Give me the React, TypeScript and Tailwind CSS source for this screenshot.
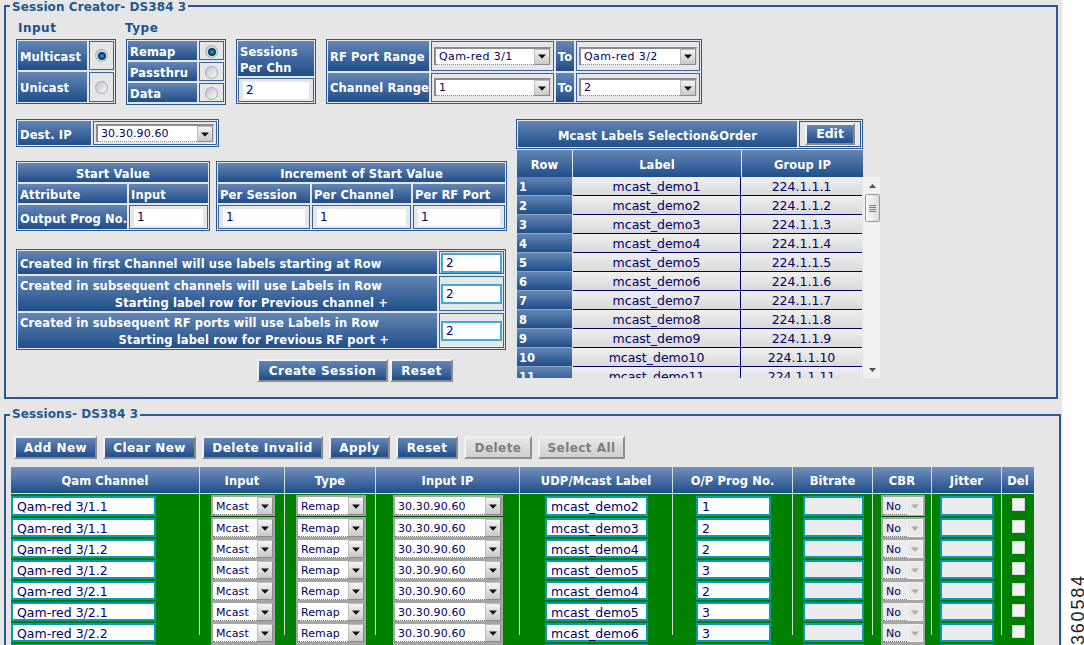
import React from "react";

const B = "bg-linear-to-b from-[#6486b4] to-[#1f4e8a] text-white font-bold text-[11.5px] tracking-[0.12px] flex items-center";
const H = B + " leading-[14px] pt-[3px]";
const H3 = B + " leading-[14px] pt-[2px]";
const LC = "bg-[#e4e6ea] border border-[#3a659b] flex items-center";
const Tbl = "border border-[#2b5a93] p-px flex flex-col gap-[2px]";

function Arrow({ off }: { off?: boolean }) {
  return (
    <div className={off
      ? "w-[16px] self-stretch border border-[#f4f4f4] bg-[#e9e9e9] flex items-center justify-center"
      : "w-[16px] self-stretch border border-[#8a8a8a] border-t-[#bdbdbd] border-l-[#bdbdbd] bg-linear-to-b from-[#f4f4f4] to-[#c9c9c9] flex items-center justify-center"}>
      <svg width="8" height="5" viewBox="0 0 8 5"><path d="M0 0.5h8L4 4.8z" fill={off ? "#aaa" : "#111"} /></svg>
    </div>
  );
}

function FormSelect({ text }: { text: string }) {
  return (
    <div className="flex-1 mx-[2px] h-[18px] flex bg-white border-t-2 border-l-2 border-[#8c8c8c] border-r border-r-[#d8d8d8] text-[11px] text-[#000066]">
      <div className={text.startsWith("Qam")
        ? "flex-1 pl-[3px] leading-[16px] tracking-[0.4px] border-b border-dotted border-[#888]"
        : "flex-1 pl-[3px] leading-[16px] tracking-[0.1px] border-b border-dotted border-[#888]"}>{text}</div>
      <Arrow />
    </div>
  );
}

function GridSelect({ text, w, first, off }: { text: string; w: string; first?: boolean; off?: boolean }) {
  return (
    <div className={w + " -mt-px"}>
      <div className={off
        ? "h-[21px] flex bg-[#ececec] border-2 border-b-1 border-[#a5a5a5] text-[11px] text-[#000066]"
        : "h-[21px] flex bg-white border-2 border-b-1 border-[#a5a5a5] text-[11px] text-[#000066]"}>
        <div className="flex-1 pl-[3px] leading-[19px] tracking-[0.1px] border-b border-dotted border-[#777]">{text}</div>
        <Arrow off={off} />
      </div>
      {first && <div className="h-px bg-[#004d00]" />}
    </div>
  );
}

function Radio({ on }: { on?: boolean }) {
  return (
    <div className="w-[13px] h-[13px] rounded-full border border-[#a8a8a8] bg-linear-to-br from-[#c4c4c4] to-[#f8f8f8] flex items-center justify-center">
      {on && <div className="w-[8px] h-[8px] rounded-full border-2 border-[#0b3f66] bg-[#1c8fc0]" />}
    </div>
  );
}

function RadioCell({ on, low }: { on?: boolean; low?: boolean }) {
  return <div className={LC + (low ? " justify-center w-[25px] pt-[2px]" : " justify-center w-[25px]")}><Radio on={on} /></div>;
}

function FormInput({ v, teal }: { v: string; teal?: boolean }) {
  return (
    <div className={teal
      ? "flex-1 mx-px h-[20px] bg-white border-2 border-[#41aad4] pl-[3px] text-[12px] leading-[16px] text-[#000066]"
      : "flex-1 mx-[3px] h-[19px] bg-white border border-[#dfe6ee] pl-[3px] text-[12px] leading-[17px] text-[#000066]"}>{v}</div>
  );
}

function Btn({ t, w, off }: { t: string; w: string; off?: boolean }) {
  return (
    <div className={w + (off
      ? " h-[23px] pt-px flex items-center justify-center border-2 border-[#f2f2f2] border-r-[#909090] border-b-[#909090] bg-linear-to-b from-[#e8e8e8] to-[#cfcfcf] text-[#7d7d7d] font-bold text-[12px] tracking-[0.45px]"
      : " h-[23px] pt-px flex items-center justify-center border-2 border-[#f2f2f2] border-r-[#8a8a8a] border-b-[#8a8a8a] bg-linear-to-b from-[#6486b4] to-[#1f4e8a] text-white font-bold text-[12px] tracking-[0.45px]")}>{t}</div>
  );
}

const labels = Array.from({ length: 11 }, (_, i) => i + 1);

const sessions: [string, string, string][] = [
  ["Qam-red 3/1.1", "mcast_demo2", "1"],
  ["Qam-red 3/1.1", "mcast_demo3", "2"],
  ["Qam-red 3/1.2", "mcast_demo4", "2"],
  ["Qam-red 3/1.2", "mcast_demo5", "3"],
  ["Qam-red 3/2.1", "mcast_demo4", "2"],
  ["Qam-red 3/2.1", "mcast_demo5", "3"],
  ["Qam-red 3/2.2", "mcast_demo6", "3"],
  ["", "", ""],
];

const Cols = "grid grid-cols-[189px_85px_91px_144px_153px_120px_80px_59px_70px_32px]";
const heads = ["Qam Channel", "Input", "Type", "Input IP", "UDP/Mcast Label", "O/P Prog No.", "Bitrate", "CBR", "Jitter", "Del"];
const GI = "border-2 border-[#0a99b0] pl-[4px] text-[#000066] text-[12.5px]";

function SessionRow({ r, i }: { r: [string, string, string]; i: number }) {
  const first = i === 0;
  const h = first ? "h-[20px] leading-[18px] " : "h-[19px] leading-[17px] ";
  return (
    <div className={first ? Cols + " h-[22px] items-start" : Cols + " h-[21px] items-start"}>
      <div><div className={h + GI + " w-[145px] bg-white"}>{r[0]}</div></div>
      <div className="pl-[11px]"><GridSelect text="Mcast" w="w-[64px]" first={first} /></div>
      <div className="pl-[11px]"><GridSelect text="Remap" w="w-[70px]" first={first} /></div>
      <div className="pl-[17px]"><GridSelect text="30.30.90.60" w="w-[110px]" first={first} /></div>
      <div className="pl-[25px]"><div className={h + GI + " w-[103px] bg-white"}>{r[1]}</div></div>
      <div className="pl-[23px]"><div className={h + GI + " w-[75px] bg-white"}>{r[2]}</div></div>
      <div className="pl-[10px]"><div className={h + GI + " w-[61px] bg-[#ececec]"} /></div>
      <div className="pl-[8px]"><GridSelect text="No" w="w-[44px]" first={first} off /></div>
      <div className="pl-[8px]"><div className={h + GI + " w-[54px] bg-[#ececec]"} /></div>
      <div className="pl-[10px] pt-[2px]"><div className="w-[13px] h-[13px] bg-[#f2f2f2] border border-[#d4d4d4]" /></div>
    </div>
  );
}

export default function App() {
  return (
    <div className="relative w-[1084px] h-[645px] overflow-hidden bg-white font-[DejaVu_Sans] text-[11px]">
      <div className="w-[1062px] h-[645px] bg-[#e6e6e6] pt-[5px] pl-[4px]">
        {/* Session creator */}
        <div className="relative w-[1054px] h-[394px] border-2 border-[#2b5a93] pl-[10px]">
          <div className="absolute -top-[7px] left-[4px] px-[2px] bg-[#e6e6e6] text-[#22598f] font-bold text-[12px] leading-[14px] tracking-[0.08px]">Session Creator- DS384 3</div>

          <div className="flex pt-[12px] gap-[10px]">
            <div className="w-[100px]">
              <div className="h-[20px] pl-[2px] text-[#1d5288] font-bold text-[12px] tracking-[0.5px] leading-[18px]">Input</div>
              <div className={Tbl + " h-[65px]"}>
                <div className="flex gap-[2px] h-[29px]">
                  <div className={H3 + " w-[69px] pl-[2px]"}>Multicast</div>
                  <RadioCell on />
                </div>
                <div className="flex gap-[2px] h-[30px]">
                  <div className={H3 + " w-[69px] pl-[2px]"}>Unicast</div>
                  <RadioCell />
                </div>
              </div>
            </div>
            <div className="w-[100px]">
              <div className="h-[20px] -ml-px text-[#1d5288] font-bold text-[12px] tracking-[0.5px] leading-[18px]">Type</div>
              <div className={Tbl + " h-[66px]"}>
                {["Remap", "Passthru", "Data"].map((t, i) => (
                  <div key={t} className="flex gap-[2px] h-[19px]">
                    <div className={H + " w-[69px] pl-[2px]"}>{t}</div>
                    <RadioCell on={i === 0} low />
                  </div>
                ))}
              </div>
            </div>
            <div className="w-[80px] pt-[20px]">
              <div className={Tbl + " h-[65px]"}>
                <div className={B + " h-[35px] pl-[2px] pt-[2px] leading-[16px]"}><span>Sessions<br />Per Chn</span></div>
                <div className={LC + " flex-1"}><FormInput v="2" /></div>
              </div>
            </div>
            <div className="w-[376px] pt-[20px]">
              <div className={Tbl + " h-[65px]"}>
                {[["RF Port Range", "Qam-red 3/1", "Qam-red 3/2"], ["Channel Range", "1", "2"]].map(([a, b, c]) => (
                  <div key={a} className="flex gap-[2px] flex-1">
                    <div className={H3 + " w-[101px] pl-[2px] whitespace-nowrap"}>{a}</div>
                    <div className={LC + " w-[123px]"}><FormSelect text={b} /></div>
                    <div className={H3 + " w-[18px] justify-center"}>To</div>
                    <div className={LC + " w-[124px]"}><FormSelect text={c} /></div>
                  </div>
                ))}
              </div>
            </div>
          </div>

          <div className="flex mt-[14px]">
            <div className="w-[500px]">
              <div className={Tbl + " w-[203px] h-[28px] !flex-row"}>
                <div className={H + " w-[73px] pl-[2px]"}>Dest. IP</div>
                <div className={LC + " w-[124px]"}><FormSelect text="30.30.90.60" /></div>
              </div>

              <div className="flex gap-[6px] mt-[14px]">
                <div className={Tbl + " w-[194px] h-[70px]"}>
                  <div className={H + " h-[19px] justify-center"}>Start Value</div>
                  <div className="flex gap-[2px] h-[19px]">
                    <div className={H + " w-[109px] pl-[2px]"}>Attribute</div>
                    <div className={H + " flex-1 pl-[2px]"}>Input</div>
                  </div>
                  <div className="flex gap-[2px] flex-1">
                    <div className={H + " w-[109px] pl-[2px] whitespace-nowrap"}>Output Prog No.</div>
                    <div className={LC + " flex-1"}><FormInput v="1" /></div>
                  </div>
                </div>
                <div className={Tbl + " w-[291px] h-[70px]"}>
                  <div className={H + " h-[19px] justify-center"}>Increment of Start Value</div>
                  <div className="flex gap-[2px] h-[19px]">
                    <div className={H + " w-[92px] pl-[2px] whitespace-nowrap"}>Per Session</div>
                    <div className={H + " w-[99px] pl-[2px] whitespace-nowrap"}>Per Channel</div>
                    <div className={H + " w-[92px] pl-[2px] whitespace-nowrap"}>Per RF Port</div>
                  </div>
                  <div className="flex gap-[2px] flex-1">
                    <div className={LC + " w-[92px]"}><FormInput v="1" /></div>
                    <div className={LC + " w-[99px]"}><FormInput v="1" /></div>
                    <div className={LC + " w-[92px]"}><FormInput v="1" /></div>
                  </div>
                </div>
              </div>

              <div className={Tbl + " w-[490px] mt-[18px]"}>
                <div className="flex gap-[2px] h-[23px]">
                  <div className={H + " w-[419px] pl-[2px]"}>Created in first Channel will use labels starting at Row</div>
                  <div className={LC + " w-[65px]"}><FormInput v="2" teal /></div>
                </div>
                <div className="flex gap-[2px] h-[35px]">
                  <div className={B + " w-[419px] !block pl-[2px] leading-[16.5px] pt-[2px]"}>
                    <div>Created in subsequent channels will use Labels in Row</div>
                    <div className="text-right pr-[49px]">Starting label row for Previous channel +</div>
                  </div>
                  <div className={LC + " w-[65px]"}><FormInput v="2" teal /></div>
                </div>
                <div className="flex gap-[2px] h-[35px]">
                  <div className={B + " w-[419px] !block pl-[2px] leading-[16.5px] pt-[2px]"}>
                    <div>Created in subsequent RF ports will use Labels in Row</div>
                    <div className="text-right pr-[48px]">Starting label row for Previous RF port +</div>
                  </div>
                  <div className={LC + " w-[65px]"}><FormInput v="2" teal /></div>
                </div>
              </div>

              <div className="flex gap-[2px] pl-[241px] mt-[9px]">
                <Btn t="Create Session" w="w-[131px]" />
                <Btn t="Reset" w="w-[63px]" />
              </div>
            </div>

            <div className="w-[364px]">
              <div className="w-[347px] h-[30px] border border-[#2b5a93] p-px flex gap-[2px]">
                <div className={H + " w-[279px] justify-center"}>Mcast Labels Selection&amp;Order</div>
                <div className="flex-1 border border-[#2b5a93] bg-[#e6e6e6] flex items-center justify-center">
                  <div className="w-[50px] h-[22px] pt-px flex items-center justify-center border-2 border-[#f2f2f2] border-r-[#8a8a8a] border-b-[#8a8a8a] bg-linear-to-b from-[#6486b4] to-[#1f4e8a] text-white font-bold text-[12.5px]">Edit</div>
                </div>
              </div>
              <div className="flex w-[346px] h-[27px] ml-px mt-px gap-px">
                <div className={H3 + " w-[55px] justify-center"}>Row</div>
                <div className={H3 + " w-[168px] justify-center"}>Label</div>
                <div className={H3 + " w-[121px] justify-center"}>Group IP</div>
              </div>
              <div className="flex h-[201px] ml-px w-[363px]">
                <div className="w-[346px] overflow-hidden">
                  {labels.map((n) => (
                    <div key={n} className="flex h-[19px] shrink-0 text-[#000066]">
                      <div className={H3 + " w-[55px] pl-[2px] border-b border-[#8fa7c6]"}>{n}</div>
                      <div className="w-[168px] ml-px border-b border-r border-[#000066] bg-linear-to-b from-[#f0f0f0] to-[#d9d9d9] text-center text-[12.5px] leading-[19px]">mcast_demo{n}</div>
                      <div className="w-[121px] border-b border-[#000066] bg-linear-to-b from-[#f0f0f0] to-[#d9d9d9] text-center text-[12.5px] leading-[19px]">224.1.1.{n}</div>
                    </div>
                  ))}
                </div>
                <div className="w-[17px] bg-[#f1f1f1] flex flex-col items-center pl-[2px]">
                  <svg className="mt-[7px]" width="7" height="4" viewBox="0 0 7 4"><path d="M3.5 0L7 4H0z" fill="#555" /></svg>
                  <div className="w-[15px] h-[28px] mt-[6px] rounded-[2px] border border-[#9a9a9a] bg-linear-to-r from-[#fafafa] to-[#dcdcdc] flex flex-col items-center justify-center gap-px">
                    <div className="w-[7px] h-px bg-[#777]" />
                    <div className="w-[7px] h-px bg-[#777]" />
                    <div className="w-[7px] h-px bg-[#777]" />
                    <div className="w-[7px] h-px bg-[#777]" />
                  </div>
                  <svg className="mt-[146px]" width="7" height="4" viewBox="0 0 7 4"><path d="M0 0h7L3.5 4z" fill="#555" /></svg>
                </div>
              </div>
            </div>
          </div>
        </div>

        {/* Sessions */}
        <div className="relative w-[1057px] h-[300px] mt-[15px] border-2 border-[#2b5a93] pl-[5px]">
          <div className="absolute -top-[9px] left-[4px] px-[2px] bg-[#e6e6e6] text-[#22598f] font-bold text-[12px] leading-[14px] tracking-[0.1px]">Sessions- DS384 3</div>
          <div className="flex gap-[6px] pl-[3px] pt-[20px]">
            <Btn t="Add New" w="w-[83px]" />
            <Btn t="Clear New" w="w-[93px]" />
            <Btn t="Delete Invalid" w="w-[121px]" />
            <Btn t="Apply" w="w-[61px]" />
            <Btn t="Reset" w="w-[62px]" />
            <Btn t="Delete" w="w-[68px]" off />
            <Btn t="Select All" w="w-[87px]" off />
          </div>
          <div className="w-[1023px] mt-[8px]">
            <div className={Cols + " h-[26px] bg-linear-to-b from-[#7191bd] to-[#1f4e8a]"}>
              {heads.map((t, i) => (
                <div key={t} className={i < 9
                  ? "flex items-center justify-center pt-[3px] text-white font-bold text-[11.5px] tracking-[0.1px] border-r border-[#cfe0cf]"
                  : "flex items-center justify-center pt-[3px] text-white font-bold text-[11.5px] tracking-[0.1px]"}>{t}</div>
              ))}
            </div>
            <div className="relative bg-[#008000] pt-[2px] border-t border-[#d5e5d5] h-[200px]">
              <div className={Cols + " absolute top-0 left-0 h-[141px] w-full"}>
                {heads.map((t, i) => (
                  <div key={t} className={i < 9 ? "border-r border-[#cfe0cf]" : ""} />
                ))}
              </div>
              <div className="relative">
                {sessions.map((r, i) => <SessionRow key={i} r={r} i={i} />)}
              </div>
            </div>
          </div>
        </div>
      </div>

      <div className="absolute right-[-29px] bottom-[27px] w-[70px] h-[16px] -rotate-90 font-[Liberation_Sans] text-[#222] text-[18px] leading-[16px] tracking-[1.8px] whitespace-nowrap">360584</div>
    </div>
  );
}
